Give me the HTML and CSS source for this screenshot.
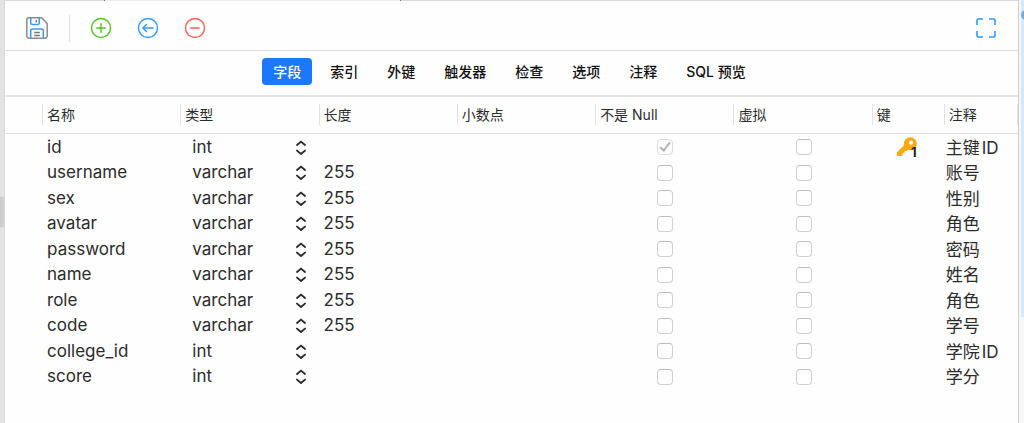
FILE: index.html
```html
<!DOCTYPE html>
<html lang="zh-CN">
<head>
    <meta charset="UTF-8">
    <meta name="viewport" content="width=device-width, initial-scale=1.0">
    <title>字段</title>
    <link rel="stylesheet" href="styles.css">
</head>
<body>
    <div class="edge edge-left"><div class="thumb"></div></div>
    <main class="panel">
        <div class="tab-strip"><div class="open-tab"></div></div>
        <div class="toolbar">
            <button class="tool" aria-label="保存">
                <svg width="22" height="22" viewBox="0 0 22 22" fill="none" stroke-width="1.5">
                    <path stroke="#8a8a8e" d="M3.2 .8H15.5L21.2 6.5V18.8a2.4 2.4 0 0 1-2.4 2.4H3.2A2.4 2.4 0 0 1 .8 18.8V3.2A2.4 2.4 0 0 1 3.2 .8Z"/>
                    <path stroke="#2e9bfa" d="M4.7 1V5.8A1.6 1.6 0 0 0 6.3 7.4H11.7A1.6 1.6 0 0 0 13.3 5.8V1M4.7 21V13.6A1.6 1.6 0 0 1 6.3 12H15.7A1.6 1.6 0 0 1 17.3 13.6V21"/>
                    <path stroke="#77777b" d="M10.3 3V5.2M8.2 15.6H13.8M8.2 18.4H13.8"/>
                </svg>
            </button>
            <span class="divider"></span>
            <button class="tool" aria-label="添加字段">
                <svg width="22" height="22" viewBox="0 0 22 22" fill="none" stroke="#4fc31f" stroke-width="1.4" stroke-linecap="round">
                    <circle cx="11" cy="11" r="9.5"/>
                    <path d="M11 6.8V15.2M6.8 11H15.2"/>
                </svg>
            </button>
            <button class="tool" aria-label="插入字段">
                <svg width="22" height="22" viewBox="0 0 22 22" fill="none" stroke="#2e9bfa" stroke-width="1.4" stroke-linecap="round" stroke-linejoin="round">
                    <circle cx="11" cy="11" r="9.5"/>
                    <path d="M16 11H5.8M9.4 7.4L5.8 11L9.4 14.6"/>
                </svg>
            </button>
            <button class="tool" aria-label="删除字段">
                <svg width="22" height="22" viewBox="0 0 22 22" fill="none" stroke="#fb5c4f" stroke-width="1.4" stroke-linecap="round">
                    <circle cx="11" cy="11" r="9.5"/>
                    <path d="M6.8 11H15.2"/>
                </svg>
            </button>
            <button class="tool fullscreen" aria-label="全屏">
                <svg width="22" height="22" viewBox="0 0 22 22" fill="none" stroke="#2e9bfa" stroke-width="1.6">
                    <path d="M2 8V3.2Q2 2 3.2 2H8M14 2H18.8Q20 2 20 3.2V8M20 14V18.8Q20 20 18.8 20H14M8 20H3.2Q2 20 2 18.8V14"/>
                </svg>
            </button>
        </div>
        <nav class="tabs">
            <button class="tab active">字段</button>
            <button class="tab">索引</button>
            <button class="tab">外键</button>
            <button class="tab">触发器</button>
            <button class="tab">检查</button>
            <button class="tab">选项</button>
            <button class="tab">注释</button>
            <button class="tab">SQL 预览</button>
        </nav>
        <table class="fields">
            <colgroup>
                <col class="col-handle">
                <col class="col-field"><col class="col-field"><col class="col-field">
                <col class="col-field"><col class="col-field"><col class="col-field">
                <col class="col-key">
                <col class="col-comment">
            </colgroup>
            <thead>
                <tr>
                    <td></td>
                    <th>名称</th>
                    <th>类型</th>
                    <th>长度</th>
                    <th>小数点</th>
                    <th>不是 Null</th>
                    <th>虚拟</th>
                    <th>键</th>
                    <th>注释</th>
                </tr>
            </thead>
            <tbody id="rows"></tbody>
        </table>
    </main>
    <div class="edge edge-right"><div class="peek"><span class="dot"></span></div></div>

    <script>
        const fields = [
            { name: 'id', type: 'int', length: '', comment: '主键ID', key: true },
            { name: 'username', type: 'varchar', length: '255', comment: '账号' },
            { name: 'sex', type: 'varchar', length: '255', comment: '性别' },
            { name: 'avatar', type: 'varchar', length: '255', comment: '角色' },
            { name: 'password', type: 'varchar', length: '255', comment: '密码' },
            { name: 'name', type: 'varchar', length: '255', comment: '姓名' },
            { name: 'role', type: 'varchar', length: '255', comment: '角色' },
            { name: 'code', type: 'varchar', length: '255', comment: '学号' },
            { name: 'college_id', type: 'int', length: '', comment: '学院ID' },
            { name: 'score', type: 'int', length: '', comment: '学分' }
        ];

        const arrows = `<svg class="arrows" width="12" height="16" viewBox="0 0 12 16" fill="none" stroke="#2b2b2b" stroke-width="1.9" stroke-linecap="round" stroke-linejoin="round">
            <path d="M2 5L6 1.6L10 5M2 10.6L6 14L10 10.6"/></svg>`;

        const keyIcon = `<span class="key"><svg width="22" height="20" viewBox="0 0 22 20">
            <path fill="#f9a90c" fill-rule="evenodd" d="M14.3 .2A6.5 6.5 0 1 1 12 12.8L10.4 14.1H8.6V16H6.6V18.4L5.6 19H.8V15.4L8.1 8.3A6.5 6.5 0 0 1 14.3 .2ZM15 3.6A2.1 2.1 0 1 0 15 7.8A2.1 2.1 0 1 0 15 3.6Z"/>
            </svg><b>1</b></span>`;

        // One table row per column of the table being designed
        function renderRow(f) {
            const types = ['int', 'varchar'].map(t => `<option${t === f.type ? ' selected' : ''}>${t}</option>`).join('');
            const comment = f.comment.replace(/[A-Z]+/, '<span class="latin">$&</span>');
            return `<tr>
                <td></td>
                <td>${f.name}</td>
                <td><div class="type"><select aria-label="${f.name} 类型">${types}</select>${arrows}</div></td>
                <td>${f.length}</td>
                <td></td>
                <td class="check"><input type="checkbox" aria-label="${f.name} 不是 Null"${f.key ? ' checked disabled' : ''}></td>
                <td class="check"><input type="checkbox" aria-label="${f.name} 虚拟"></td>
                <td class="key-cell">${f.key ? keyIcon : ''}</td>
                <td class="comment">${comment}</td>
            </tr>`;
        }

        document.getElementById('rows').innerHTML = fields.map(renderRow).join('');
    </script>
</body>
</html>
```
FILE: styles.css
```css
* {
    box-sizing: border-box;
}
body {
    margin: 0;
    min-height: 100vh;
    display: grid;
    grid-template-columns: 5px 1fr 5px;
    background-color: #fefefe;
    color: #2b2b2b;
    font-family: Inter, "Noto Sans CJK SC", sans-serif;
    font-size: 17px;
}
button, select {
    font: inherit;
    color: inherit;
    border: none;
    background: none;
    margin: 0;
    padding: 0;
}
.edge-left {
    background-color: #e3e3e3;
    border-right: 1px solid #dadada;
    padding-top: 197px;
}
.thumb {
    height: 30px;
    background-color: #cdcdcd;
}
.edge-right {
    background-color: #f7f7f7;
    padding-left: 2px;
}
.peek {
    height: 317px;
    padding-top: 10px;
    background-color: #d6e8fb;
    overflow: hidden;
}
.dot {
    display: block;
    width: 10px;
    height: 10px;
    border-radius: 50%;
    background-color: #72a9ee;
}
.panel {
    min-width: 0;
    border-right: 1px solid #cfcfcf;
}
.tab-strip {
    height: 1px;
    padding-left: 99px;
    background-color: #d8d8d8;
}
.open-tab {
    width: 297px;
    height: 1px;
    background-color: #ececec;
    border: solid #777;
    border-width: 0 1px;
}
.toolbar {
    display: flex;
    align-items: center;
    height: 50px;
    padding: 5px 21px 0;
    gap: 25px;
    border-bottom: 1px solid #dcdcdc;
}
.tool {
    width: 22px;
    height: 22px;
}
.tool svg {
    display: block;
}
.divider {
    width: 1px;
    height: 27px;
    margin: 0 -5px 0 -4px;
    background-color: #dedede;
}
.fullscreen {
    margin-left: auto;
}
.tabs {
    display: flex;
    justify-content: center;
    gap: 7px;
    padding: 7px 4px 10px 0;
    border-bottom: 2px solid #e6e6e6;
}
.tab {
    height: 27px;
    padding: 0 11px;
    border-radius: 4px;
    font-size: 14px;
    font-weight: 500;
    line-height: 27px;
    color: #111;
}
.tab.active {
    background-color: #1b78fa;
    color: white;
}
.fields {
    width: 100%;
    table-layout: fixed;
    border-collapse: collapse;
}
.col-handle {
    width: 37px;
}
.col-field {
    width: 138px;
}
.col-key {
    width: 72px;
}
.col-comment {
    width: 74px;
}
.fields th, .fields td {
    padding: 0 0 0 5px;
    text-align: left;
    white-space: nowrap;
}
.fields thead tr {
    height: 36px;
    border-bottom: 1px solid #dedede;
}
.fields th {
    font-size: 14px;
    font-weight: 400;
    line-height: 21px;
    background: linear-gradient(#e2e2e2, #e2e2e2) left center / 1px 21px no-repeat;
}
.fields th:last-child {
    background: linear-gradient(#e2e2e2, #e2e2e2) left center / 1px 21px no-repeat,
        linear-gradient(#e2e2e2, #e2e2e2) right center / 1px 21px no-repeat;
}
.fields tbody tr {
    height: 25px;
    line-height: 23px;
}
.fields tbody tr:nth-child(odd) {
    height: 26px;
}
.fields tbody td {
    padding-top: 2px;
}
.type {
    position: relative;
    height: 23px;
}
.type select {
    appearance: none;
    display: block;
    width: 100%;
    height: 23px;
    padding-left: 7px;
    line-height: 23px;
}
.arrows {
    position: absolute;
    top: 4px;
    right: 12px;
    pointer-events: none;
}
.fields .check {
    padding-left: 2px;
}
.check input {
    appearance: none;
    display: block;
    width: 16px;
    height: 16px;
    margin: 0 auto;
    border: 1px solid #d0d0d0;
    border-top-color: #bdbdbd;
    border-radius: 4px;
    background-color: white;
}
.check input:checked {
    border-color: #dcdcdc;
}
.check input:checked::before {
    content: "";
    box-sizing: border-box;
    display: block;
    width: 6px;
    height: 11px;
    margin: 0 0 0 4px;
    border: solid #b4b4b4;
    border-width: 0 2px 2px 0;
    transform: rotate(38deg);
}
.fields .key-cell {
    padding-left: 24px;
}
.key {
    display: block;
    position: relative;
    width: 22px;
    height: 20px;
}
.key svg {
    display: block;
}
.key b {
    position: absolute;
    right: 1px;
    bottom: -2px;
    font-size: 13px;
    line-height: 14px;
    color: #222;
}
.fields tbody .comment {
    padding: 4px 0 0 2px;
    line-height: 21px;
}
.latin {
    margin-left: 2px;
}
```
